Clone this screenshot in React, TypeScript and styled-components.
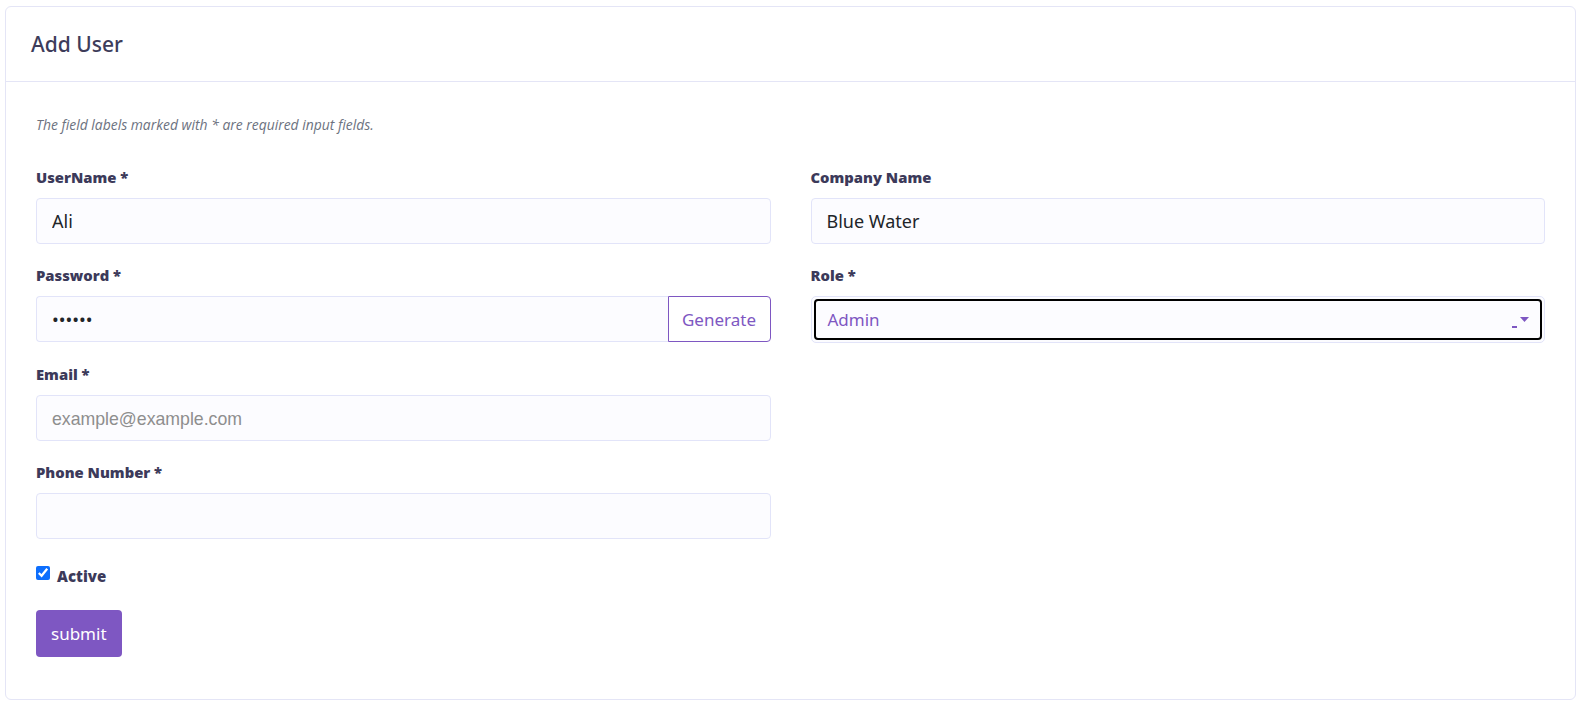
import React, { useState } from 'react';
import styled, { createGlobalStyle } from 'styled-components';

const GlobalStyle = createGlobalStyle`
  html, body {
    margin: 0;
    background: #ffffff;
  }
  body {
    font-family: 'Open Sans', 'Noto Sans', sans-serif;
  }
`;

const Page = styled.div`
  padding: 6px 5px;
`;

const Card = styled.div`
  border: 1px solid #e4e5f6;
  border-radius: 6px;
  background: #fff;
`;

const CardHeader = styled.div`
  height: 74px;
  display: flex;
  align-items: center;
  padding: 0 25px;
  border-bottom: 1px solid #e4e5f6;
`;

const Title = styled.h4`
  margin: 0;
  font-family: 'Noto Sans', sans-serif;
  font-size: 21px;
  font-weight: 500;
  color: #3d3c5a;
`;

const CardBody = styled.div`
  padding: 34px 30px 42px;
`;

const Note = styled.p`
  margin: 0 0 33px;
  font-family: 'Open Sans', sans-serif;
  font-style: italic;
  font-size: 13.9px;
  line-height: 18px;
  color: #6c7280;
`;

const Grid = styled.div`
  display: grid;
  grid-template-columns: 1fr 1fr;
  column-gap: 40px;
  align-items: start;
`;

const Column = styled.div`
  display: flex;
  flex-direction: column;
  gap: 21px;
`;

const Field = styled.div<{ $push?: number }>`
  display: flex;
  flex-direction: column;
  gap: 11px;
  margin-top: ${(p) => p.$push ?? 0}px;
`;

const Label = styled.label`
  font-family: 'Open Sans', sans-serif;
  font-weight: 800;
  font-size: 14.8px;
  line-height: 20px;
  color: #3c3a5a;
`;

const Input = styled.input`
  box-sizing: border-box;
  height: 46px;
  width: 100%;
  padding: 0 15px;
  border: 1px solid #e2e4f9;
  border-radius: 4px;
  background: #fcfcff;
  font-family: 'Noto Sans', sans-serif;
  font-size: 18px;
  color: #212529;
  outline: none;

  &::placeholder {
    font-family: 'Liberation Sans', Arial, sans-serif;
    font-size: 17.7px;
    color: #8e8e8e;
  }
`;

const InputGroup = styled.div`
  display: flex;

  ${Input} {
    border-radius: 4px 0 0 4px;
    border-right: none;
  }
`;

const GenerateButton = styled.button`
  box-sizing: border-box;
  flex: 0 0 auto;
  width: 103px;
  height: 46px;
  padding: 0;
  border: 1px solid #7e57c2;
  border-radius: 0 4px 4px 0;
  background: #fff;
  color: #7e57c2;
  font-family: 'Noto Sans', sans-serif;
  font-size: 17px;
  cursor: pointer;
`;

const SelectFrame = styled.div`
  box-sizing: border-box;
  height: 47px;
  padding: 2px;
  border: 1px solid #e2e4f9;
  border-radius: 5px;
  background: #fcfcff;
`;

const SelectBox = styled.div`
  box-sizing: border-box;
  height: 100%;
  display: flex;
  align-items: center;
  padding: 0 11px 0 12px;
  border: 2px solid #000;
  border-radius: 4px;
  color: #7e57c2;
  font-family: 'Noto Sans', sans-serif;
  font-size: 17px;
  cursor: pointer;
`;

const SelectValue = styled.span`
  flex: 1;
`;

const Caret = styled.span`
  display: flex;
  align-items: flex-start;
  gap: 3px;
  padding-top: 6px;
`;

const Dash = styled.span`
  width: 5px;
  height: 1.5px;
  margin-top: 9px;
  background: #7e57c2;
`;

const CheckRow = styled.label`
  display: flex;
  align-items: center;
  gap: 7px;
  height: 20px;
  margin-top: 24px;
  font-family: 'Open Sans', sans-serif;
  font-weight: 800;
  font-size: 15px;
  color: #3c3a5a;
`;

const CheckText = styled.span`
  padding-top: 6px;
`;

const Check = styled.input`
  margin: 0;
  width: 14px;
  height: 14px;
  accent-color: #0d6efd;
`;

const SubmitButton = styled.button`
  margin-top: 27px;
  height: 47px;
  padding: 0 15px;
  border: none;
  border-radius: 4px;
  background: #7e57c2;
  color: #fff;
  font-family: 'Noto Sans', sans-serif;
  font-size: 17px;
  cursor: pointer;
`;

export default function App() {
  const [active, setActive] = useState(true);

  return (
    <>
      <GlobalStyle />
      <Page>
        <Card>
          <CardHeader>
            <Title>Add User</Title>
          </CardHeader>
          <CardBody>
            <Note>The field labels marked with * are required input fields.</Note>
            <Grid>
              <Column>
                <Field>
                  <Label>UserName *</Label>
                  <Input defaultValue="Ali" />
                </Field>
                <Field>
                  <Label>Password *</Label>
                  <InputGroup>
                    <Input type="password" defaultValue="123456" />
                    <GenerateButton type="button">Generate</GenerateButton>
                  </InputGroup>
                </Field>
                <Field $push={1}>
                  <Label>Email *</Label>
                  <Input placeholder="example@example.com" />
                </Field>
                <Field>
                  <Label>Phone Number *</Label>
                  <Input />
                </Field>
              </Column>
              <Column>
                <Field>
                  <Label>Company Name</Label>
                  <Input defaultValue="Blue Water" />
                </Field>
                <Field>
                  <Label>Role *</Label>
                  <SelectFrame>
                    <SelectBox>
                      <SelectValue>Admin</SelectValue>
                      <Caret>
                        <Dash />
                        <svg width="9" height="5" viewBox="0 0 9 5">
                          <path d="M0 0h9L4.5 5z" fill="#7e57c2" />
                        </svg>
                      </Caret>
                    </SelectBox>
                  </SelectFrame>
                </Field>
              </Column>
            </Grid>
            <CheckRow>
              <Check type="checkbox" checked={active} onChange={(e) => setActive(e.target.checked)} />
              <CheckText>Active</CheckText>
            </CheckRow>
            <SubmitButton type="button">submit</SubmitButton>
          </CardBody>
        </Card>
      </Page>
    </>
  );
}
